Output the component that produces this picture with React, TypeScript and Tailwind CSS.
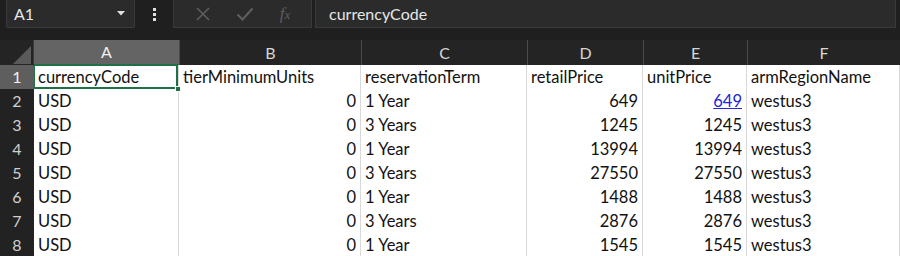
const cols = ["A", "B", "C", "D", "E", "F"];

type Row = [string, string, string, string, string, string];

const rows: Row[] = [
  ["currencyCode", "tierMinimumUnits", "reservationTerm", "retailPrice", "unitPrice", "armRegionName"],
  ["USD", "0", "1 Year", "649", "649", "westus3"],
  ["USD", "0", "3 Years", "1245", "1245", "westus3"],
  ["USD", "0", "1 Year", "13994", "13994", "westus3"],
  ["USD", "0", "3 Years", "27550", "27550", "westus3"],
  ["USD", "0", "1 Year", "1488", "1488", "westus3"],
  ["USD", "0", "3 Years", "2876", "2876", "westus3"],
  ["USD", "0", "1 Year", "1545", "1545", "westus3"],
];

const grid = "grid grid-cols-[34px_145px_182px_166px_116px_104px_1fr]";

function FormulaBar() {
  return (
    <div className="flex h-[30px] items-start gap-0 bg-[#1f1f1f] pl-[6px] pr-[4px]">
      <div className="flex h-[28px] w-[129px] items-center justify-between rounded-b-[2px] border-x border-b border-[#3a3a3a] bg-[#2b2b2b] pl-[7px] pr-[9px]">
        <span className="text-[16px] text-[#e6e6e6]">A1</span>
        <svg viewBox="0 0 8 5" className="h-[5px] w-[8px]" aria-hidden="true">
          <path d="M0 0h8L4 4.5z" fill="#e0e0e0" />
        </svg>
      </div>
      <div className="flex h-[28px] w-[38px] flex-col items-center justify-center gap-[2px]">
        <span className="h-[3px] w-[3px] bg-[#e0e0e0]" />
        <span className="h-[3px] w-[3px] bg-[#e0e0e0]" />
        <span className="h-[3px] w-[3px] bg-[#e0e0e0]" />
      </div>
      <div className="flex h-[28px] w-[139px] items-center justify-around border-x border-b border-[#3a3a3a] bg-[#2b2b2b] px-[8px]">
        <svg viewBox="0 0 16 16" className="h-[16px] w-[16px]" aria-hidden="true">
          <path d="M2 2l12 12M14 2L2 14" stroke="#5e5e5e" strokeWidth="1.6" />
        </svg>
        <svg viewBox="0 0 18 16" className="h-[16px] w-[18px]" aria-hidden="true">
          <path d="M1.5 8.5l5 5L16.5 2.5" stroke="#5e5e5e" strokeWidth="2.2" fill="none" />
        </svg>
        <span className="font-['Liberation_Serif',serif] text-[17px] italic text-[#5e5e5e]">
          f<span className="text-[13px]">x</span>
        </span>
      </div>
      <div className="ml-[3px] flex h-[28px] flex-1 items-center border-x border-b border-[#3a3a3a] bg-[#2b2b2b] pl-[13px]">
        <span className="text-[16px] text-[#e6e6e6]">currencyCode</span>
      </div>
    </div>
  );
}

function Sheet() {
  return (
    <div className="bg-[#1f1f1f] pt-[10px]">
      <div className={`${grid} h-[25px] bg-[#242424]`}>
        <div className="relative border-r border-[#3a3a3a]">
          <svg viewBox="0 0 20 20" className="absolute bottom-[2px] right-[2px] h-[18px] w-[18px]" aria-hidden="true">
            <path d="M20 0V20H0z" fill="#5a5a5a" />
          </svg>
        </div>
        {cols.map((c, i) => (
          <div
            key={c}
            className={`flex items-center justify-center text-[16px] ${
              i === 0
                ? "border-b-2 border-[#1f7145] bg-[#646464] text-[#f0f0f0]"
                : "border-l border-[#4a4a4a] text-[#d6d6d6]"
            }`}
          >
            {c}
          </div>
        ))}
      </div>
      {rows.map((r, ri) => (
        <div key={ri} className={`${grid} h-[24px]`}>
          <div
            className={`flex items-center justify-center border-b border-[#4a4a4a] text-[16px] ${
              ri === 0 ? "bg-[#5e5e5e] text-[#f2f2f2]" : "bg-[#222222] text-[#d0d0d0]"
            }`}
          >
            {ri + 1}
          </div>
          {r.map((v, ci) => {
            const numeric = ri > 0 && ci !== 0 && ci !== 2 && ci !== 5;
            const selected = ri === 0 && ci === 0;
            const link = ri === 1 && ci === 4;
            return (
              <div
                key={ci}
                className={`relative flex items-center overflow-hidden whitespace-nowrap border-b border-r border-[#d9d9d9] bg-white px-[4px] text-[16.5px] text-[#111] ${
                  numeric ? "justify-end" : ""
                }`}
              >
                {link ? <span className="text-[#2424d8] underline">{v}</span> : v}
                {selected && (
                  <span className="pointer-events-none absolute inset-0 -left-px -top-px border-2 border-[#1f7145]" />
                )}
              </div>
            );
          })}
        </div>
      ))}
    </div>
  );
}

export default function App() {
  return (
    <div className="h-[256px] w-[900px] overflow-hidden bg-[#1f1f1f] font-['Lato',sans-serif]">
      <FormulaBar />
      <div className="relative">
        <Sheet />
        <span className="absolute left-[175px] top-[56px] h-[6px] w-[6px] border border-white bg-[#1f7145]" />
      </div>
    </div>
  );
}
